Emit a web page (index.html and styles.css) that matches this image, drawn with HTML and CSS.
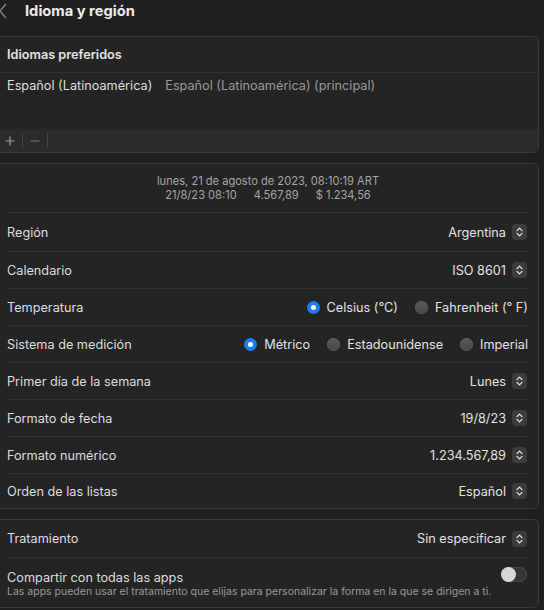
FILE: index.html
```html
<!DOCTYPE html>
<html lang="es">
<head>
<meta charset="utf-8">
<title>Idioma y región</title>
<link rel="stylesheet" href="styles.css">
</head>
<body>
<header class="topbar">
  <svg class="back" width="8" height="20" viewBox="0 0 8 20"><path d="M6.5 3.5 L1 10 L6.5 16.5" fill="none" stroke="#8a8a8a" stroke-width="1.3" stroke-linecap="round" stroke-linejoin="round"/></svg>
  <h1 class="title">Idioma y región</h1>
</header>

<main class="content">
  <section class="panel">
    <div class="panel-head">Idiomas preferidos</div>
    <div class="lang-list">
      <div class="lang-row"><span class="lang-name">Español (Latinoamérica)</span><span class="lang-desc">Español (Latinoamérica) (principal)</span></div>
    </div>
    <div class="toolbar">
      <span class="tool-btn"><svg width="10" height="10" viewBox="0 0 10 10"><path d="M5 0.5V9.5M0.5 5H9.5" stroke="#a0a0a0" stroke-width="1.2"/></svg></span>
      <span class="tool-sep"></span>
      <span class="tool-btn"><svg width="10" height="10" viewBox="0 0 10 10"><path d="M0.5 5H9.5" stroke="#7a7a7a" stroke-width="1.2"/></svg></span>
      <span class="tool-sep"></span>
    </div>
  </section>

  <section class="panel">
    <div class="preview">
      <div>lunes, 21 de agosto de 2023, 08:10:19 ART</div>
      <div class="preview-line"><span>21/8/23 08:10</span><span>4.567,89</span><span>$ 1.234,56</span></div>
    </div>
    <div class="rows">
      <div class="row row-first"><span class="label">Región</span><span class="popup">Argentina<svg class="stepper" width="15" height="16" viewBox="0 0 15 16"><rect width="15" height="16" rx="4" fill="#3c3c3c"/><path d="M5 6.6 L7.5 4.1 L10 6.6 M5 9.4 L7.5 11.9 L10 9.4" fill="none" stroke="#e6e6e6" stroke-width="1.3" stroke-linecap="round" stroke-linejoin="round"/></svg></span></div>
      <div class="row"><span class="label">Calendario</span><span class="popup">ISO 8601<svg class="stepper" width="15" height="16" viewBox="0 0 15 16"><rect width="15" height="16" rx="4" fill="#3c3c3c"/><path d="M5 6.6 L7.5 4.1 L10 6.6 M5 9.4 L7.5 11.9 L10 9.4" fill="none" stroke="#e6e6e6" stroke-width="1.3" stroke-linecap="round" stroke-linejoin="round"/></svg></span></div>
      <div class="row"><span class="label">Temperatura</span>
        <span class="radios">
          <span class="radio-opt"><span class="radio on"></span>Celsius (°C)</span>
          <span class="radio-opt"><span class="radio"></span>Fahrenheit (° F)</span>
        </span>
      </div>
      <div class="row"><span class="label">Sistema de medición</span>
        <span class="radios">
          <span class="radio-opt"><span class="radio on"></span>Métrico</span>
          <span class="radio-opt"><span class="radio"></span>Estadounidense</span>
          <span class="radio-opt"><span class="radio"></span>Imperial</span>
        </span>
      </div>
      <div class="row"><span class="label">Primer día de la semana</span><span class="popup">Lunes<svg class="stepper" width="15" height="16" viewBox="0 0 15 16"><rect width="15" height="16" rx="4" fill="#3c3c3c"/><path d="M5 6.6 L7.5 4.1 L10 6.6 M5 9.4 L7.5 11.9 L10 9.4" fill="none" stroke="#e6e6e6" stroke-width="1.3" stroke-linecap="round" stroke-linejoin="round"/></svg></span></div>
      <div class="row"><span class="label">Formato de fecha</span><span class="popup">19/8/23<svg class="stepper" width="15" height="16" viewBox="0 0 15 16"><rect width="15" height="16" rx="4" fill="#3c3c3c"/><path d="M5 6.6 L7.5 4.1 L10 6.6 M5 9.4 L7.5 11.9 L10 9.4" fill="none" stroke="#e6e6e6" stroke-width="1.3" stroke-linecap="round" stroke-linejoin="round"/></svg></span></div>
      <div class="row"><span class="label">Formato numérico</span><span class="popup">1.234.567,89<svg class="stepper" width="15" height="16" viewBox="0 0 15 16"><rect width="15" height="16" rx="4" fill="#3c3c3c"/><path d="M5 6.6 L7.5 4.1 L10 6.6 M5 9.4 L7.5 11.9 L10 9.4" fill="none" stroke="#e6e6e6" stroke-width="1.3" stroke-linecap="round" stroke-linejoin="round"/></svg></span></div>
      <div class="row row-last"><span class="label">Orden de las listas</span><span class="popup">Español<svg class="stepper" width="15" height="16" viewBox="0 0 15 16"><rect width="15" height="16" rx="4" fill="#3c3c3c"/><path d="M5 6.6 L7.5 4.1 L10 6.6 M5 9.4 L7.5 11.9 L10 9.4" fill="none" stroke="#e6e6e6" stroke-width="1.3" stroke-linecap="round" stroke-linejoin="round"/></svg></span></div>
    </div>
  </section>

  <section class="panel">
    <div class="rows">
      <div class="row row-treat"><span class="label">Tratamiento</span><span class="popup">Sin especificar<svg class="stepper" width="15" height="16" viewBox="0 0 15 16"><rect width="15" height="16" rx="4" fill="#3c3c3c"/><path d="M5 6.6 L7.5 4.1 L10 6.6 M5 9.4 L7.5 11.9 L10 9.4" fill="none" stroke="#e6e6e6" stroke-width="1.3" stroke-linecap="round" stroke-linejoin="round"/></svg></span></div>
      <div class="row row-share">
        <div class="share-text">
          <div class="label">Compartir con todas las apps</div>
          <div class="sub">Las apps pueden usar el tratamiento que elijas para personalizar la forma en la que se dirigen a ti.</div>
        </div>
        <span class="toggle"><span class="knob"></span></span>
      </div>
    </div>
  </section>
</main>
</body>
</html>
```

FILE: styles.css
```css
* { box-sizing: border-box; }

html, body {
  margin: 0;
  padding: 0;
  background: #1f1f1f;
}

body {
  font-family: "Inter", "Liberation Sans", sans-serif;
  font-size: 12.7px;
  color: #dedede;
  width: 544px;
  height: 610px;
  overflow: hidden;
}

.topbar {
  display: flex;
  align-items: center;
  height: 21px;
  margin-bottom: 15px;
}

.back {
  display: block;
  margin-left: -1px;
}

.title {
  margin: 0 0 0 18px;
  font-size: 14.7px;
  font-weight: 700;
  color: #ececec;
  line-height: 20px;
}

.content {
  display: flex;
  flex-direction: column;
  gap: 10px;
  margin-left: -7px;
  width: 546px;
}

.panel {
  background: #242424;
  border: 1px solid #3a3a3a;
  border-radius: 6px;
  overflow: hidden;
}

.panel-head {
  height: 36px;
  display: flex;
  align-items: center;
  padding-left: 13px;
  font-weight: 600;
  color: #e4e4e4;
  border-bottom: 1px solid #333333;
}

.lang-list {
  height: 56px;
  padding: 5px 0 0 13px;
}

.lang-row {
  display: flex;
  gap: 13px;
  line-height: 16px;
}

.lang-desc {
  color: #9a9a9a;
}

.toolbar {
  height: 23px;
  background: #2b2b2b;
  display: flex;
  align-items: center;
  padding-left: 9px;
}

.tool-btn {
  display: flex;
  align-items: center;
  justify-content: center;
  width: 13px;
  height: 23px;
}

.tool-btn svg { display: block; }

.tool-sep {
  width: 1px;
  height: 15px;
  background: #444444;
  margin: 0 5px 0 6px;
}

.preview {
  height: 49px;
  display: flex;
  flex-direction: column;
  align-items: center;
  justify-content: center;
  font-size: 11.1px;
  line-height: 14px;
  color: #a6a6a6;
  border-bottom: 1px solid #333333;
  margin: 0 9px 0 13px;
}

.preview-line {
  display: flex;
  gap: 17px;
}

.rows {
  margin: 0 9px 0 13px;
}

.row {
  height: 37px;
  display: flex;
  align-items: center;
  justify-content: space-between;
  padding-right: 2px;
  border-bottom: 1px solid #333333;
}

.row-first { height: 39px; }
.row-last { height: 34px; border-bottom: none; }
.row-treat { height: 38px; }

.label {
  color: #dedede;
}

.popup {
  display: flex;
  align-items: center;
  gap: 6px;
  color: #e2e2e2;
}

.stepper { display: block; }

.radios {
  display: flex;
  gap: 17px;
  margin-right: -1px;
}

.radio-opt {
  display: flex;
  align-items: center;
  gap: 7px;
  color: #e2e2e2;
}

.radio {
  width: 13px;
  height: 13px;
  border-radius: 50%;
  background: linear-gradient(#5a5a5a, #474747);
  box-shadow: inset 0 0 0 0.5px #5e5e5e;
  position: relative;
}

.radio.on {
  background: #1a7ef2;
  box-shadow: none;
}

.radio.on::after {
  content: "";
  position: absolute;
  left: 4px;
  top: 4px;
  width: 5px;
  height: 5px;
  border-radius: 50%;
  background: #ffffff;
}

.row-share {
  height: 49px;
  border-bottom: none;
  align-items: flex-start;
  padding-top: 12px;
}

.share-text .label {
  line-height: 16px;
}

.sub {
  font-size: 10.5px;
  line-height: 12px;
  color: #9a9a9a;
}

.toggle {
  width: 26px;
  height: 15px;
  border-radius: 8px;
  background: #353535;
  box-shadow: inset 0 0 0 1px #474747;
  margin-top: -3px;
  display: flex;
  align-items: center;
}

.knob {
  width: 15px;
  height: 15px;
  border-radius: 50%;
  background: #d6d6d6;
}
```
